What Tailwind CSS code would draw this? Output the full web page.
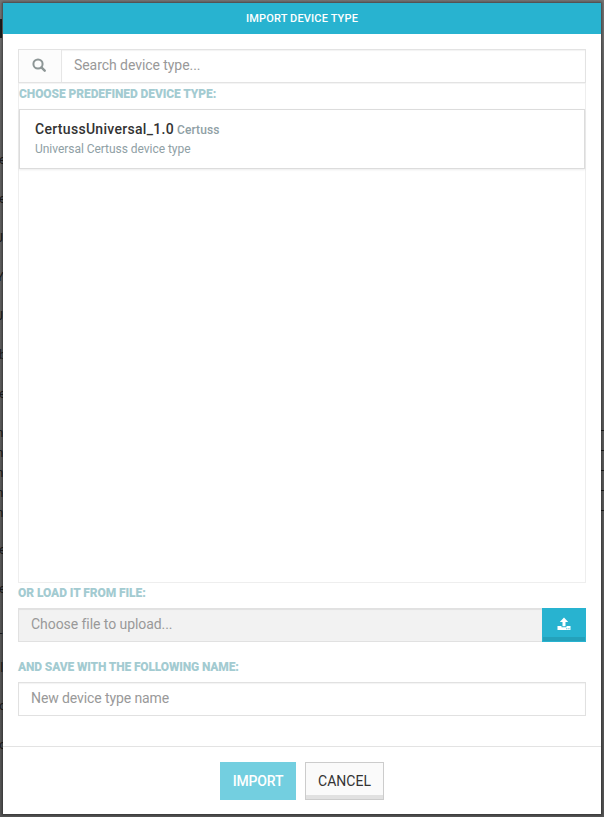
<!DOCTYPE html>
<html lang="en">
<head>
<meta charset="utf-8">
<title>Import device type</title>
<script src="https://cdn.jsdelivr.net/npm/@tailwindcss/browser@4"></script>
</head>
<body class="relative h-[817px] w-[604px] overflow-hidden bg-[#666] bg-linear-to-b from-[#747474] via-[#626262] via-10% to-[#555] p-[3px] font-['Roboto',sans-serif]">
<!-- page behind the dialog -->
<div class="absolute inset-0 text-[13px] leading-4 text-[#1c1c1c]" aria-hidden="true">
  <i class="absolute left-0 top-[19px] h-[19px] w-[2px] bg-[#1c1c1c]"></i>
  <span class="absolute -left-[1px] top-[152px]">e</span>
  <span class="absolute -left-[1px] top-[191px]">e</span>
  <span class="absolute -left-[4px] top-[230px]">J</span>
  <span class="absolute -left-[4px] top-[269px]">Y</span>
  <span class="absolute -left-[4px] top-[308px]">J</span>
  <span class="absolute -left-[1px] top-[347px]">b</span>
  <span class="absolute -left-[1px] top-[386px]">e</span>
  <span class="absolute -left-[8px] top-[425px]">m</span>
  <span class="absolute -left-[8px] top-[445px]">m</span>
  <span class="absolute -left-[8px] top-[465px]">m</span>
  <span class="absolute -left-[8px] top-[485px]">m</span>
  <span class="absolute -left-[8px] top-[505px]">m</span>
  <span class="absolute -left-[1px] top-[542px]">e</span>
  <span class="absolute -left-[1px] top-[581px]">e</span>
  <span class="absolute -left-[1px] top-[625px]">-</span>
  <span class="absolute -left-[2px] top-[660px]">'l</span>
  <span class="absolute -left-[1px] top-[698px]">o</span>
  <span class="absolute -left-[1px] top-[737px]">o</span>
  <i class="absolute right-0 top-[430px] h-px w-[3px] bg-[#1c1c1c]"></i>
  <i class="absolute right-0 top-[450px] h-px w-[3px] bg-[#1c1c1c]"></i>
  <i class="absolute right-0 top-[470px] h-px w-[3px] bg-[#1c1c1c]"></i>
  <i class="absolute right-0 top-[490px] h-px w-[3px] bg-[#1c1c1c]"></i>
  <i class="absolute right-0 top-[510px] h-px w-[3px] bg-[#1c1c1c]"></i>
</div>

<div class="relative flex h-[811px] w-[598px] flex-col bg-white shadow-[0_0_2px_1px_rgba(0,0,0,0.4)]">
  <header class="flex h-[31px] shrink-0 items-center justify-center bg-[#28b3d0] pt-px text-[11px] font-medium text-white"><span class="tracking-[0.15px]">IMPORT DEVICE TYPE</span></header>

  <main class="flex flex-1 flex-col px-[15px] pt-[15px] text-[14px] text-[#999]">
    <div class="flex h-[34px] shrink-0 border border-[#e3e3e3]">
      <div class="flex w-[43px] items-center justify-center border-r border-[#e6e6e6] bg-[#fcfcfc] pr-[2px] pb-[2px]">
        <svg class="size-[14px]" viewBox="0 0 14 14" fill="none" stroke="#8d9696" stroke-width="2"><circle cx="6" cy="6" r="4.6"/><path d="M9.4 9.4 12.7 12.7" stroke-width="2.4" stroke-linecap="round"/></svg>
      </div>
      <div class="flex flex-1 items-center pl-3 shadow-[inset_0_1px_1px_rgba(0,0,0,0.05)]"><span class="relative -top-px tracking-[-0.06px]">Search device type...</span></div>
    </div>
    <section class="h-[500px] shrink-0 border-x border-b border-[#eee] shadow-[inset_0_1px_0_#f4f4f4]">
      <h2 class="h-[26px] pt-px text-[12px] leading-5 font-black text-[#a3cbd1]"><span class="tracking-[-0.08px]">CHOOSE PREDEFINED DEVICE TYPE:</span></h2>
      <article class="h-[60px] border border-[#dcdcdc] bg-white pt-[10px] pl-[15px] shadow-[0_1px_2px_rgba(0,0,0,0.08)]">
        <div class="flex h-[19px] items-baseline gap-[3px] leading-[19px]"><b class="font-medium tracking-[0.3px] text-[#333]">CertussUniversal_1.0</b><span class="text-[12px] font-medium tracking-[0.1px] text-[#8fa0a5]">Certuss</span></div>
        <p class="text-[12px] leading-5 text-[#8fa0a5]"><span class="tracking-[-0.04px]">Universal Certuss device type</span></p>
      </article>
    </section>
    <h2 class="h-[25px] shrink-0 text-[12px] leading-5 font-black text-[#a3cbd1]"><span class="tracking-[-0.07px]">OR LOAD IT FROM FILE:</span></h2>
    <div class="flex h-[34px] shrink-0">
      <div class="flex flex-1 items-center border border-r-0 border-[#e1e1e1] bg-[#f2f2f2] pl-3 shadow-[inset_0_1px_1px_rgba(0,0,0,0.07)]"><span class="relative -top-px tracking-[-0.06px]">Choose file to upload...</span></div>
      <div class="flex w-[44px] justify-center border border-[#28b3d0] bg-[#28b3d0] pt-[8px] shadow-[inset_0_-4px_0_#24a1bb]">
        <svg class="h-[14px] w-[14px]" viewBox="0 0 14 14" fill="#fff"><path d="M7 .5 11.2 5H8.5v4.2h-3V5H2.8z"/><path d="M.5 9h4v1.2h5V9h4v4H.5z"/><path d="M9.3 11.2h1v1h-1zM11.4 11.2h1v1h-1z" fill="#28b3d0"/></svg>
      </div>
    </div>
    <h2 class="mt-[15px] h-[25px] shrink-0 text-[12px] leading-5 font-black text-[#a3cbd1]"><span class="tracking-[-0.14px]">AND SAVE WITH THE FOLLOWING NAME:</span></h2>
    <div class="flex h-[34px] shrink-0 items-center border border-[#e1e1e1] pl-3 shadow-[inset_0_1px_1px_rgba(0,0,0,0.05)]"><span class="relative -top-px tracking-[-0.1px]">New device type name</span></div>
  </main>

  <footer class="flex h-[68px] shrink-0 justify-center gap-[9px] border-t border-[#e3e3e3] pt-[15px] text-[14px]">
    <div class="flex h-[38px] w-[76px] items-center justify-center bg-[#73cfe0] font-medium text-white"><span class="tracking-[-0.2px]">IMPORT</span></div>
    <div class="flex h-[38px] w-[79px] items-center justify-center border border-[#ccc] bg-[#fafafa] text-[#333] shadow-[inset_0_-4px_0_#e1e1e1]"><span class="tracking-[0px]">CANCEL</span></div>
  </footer>
</div>
</body>
</html>
